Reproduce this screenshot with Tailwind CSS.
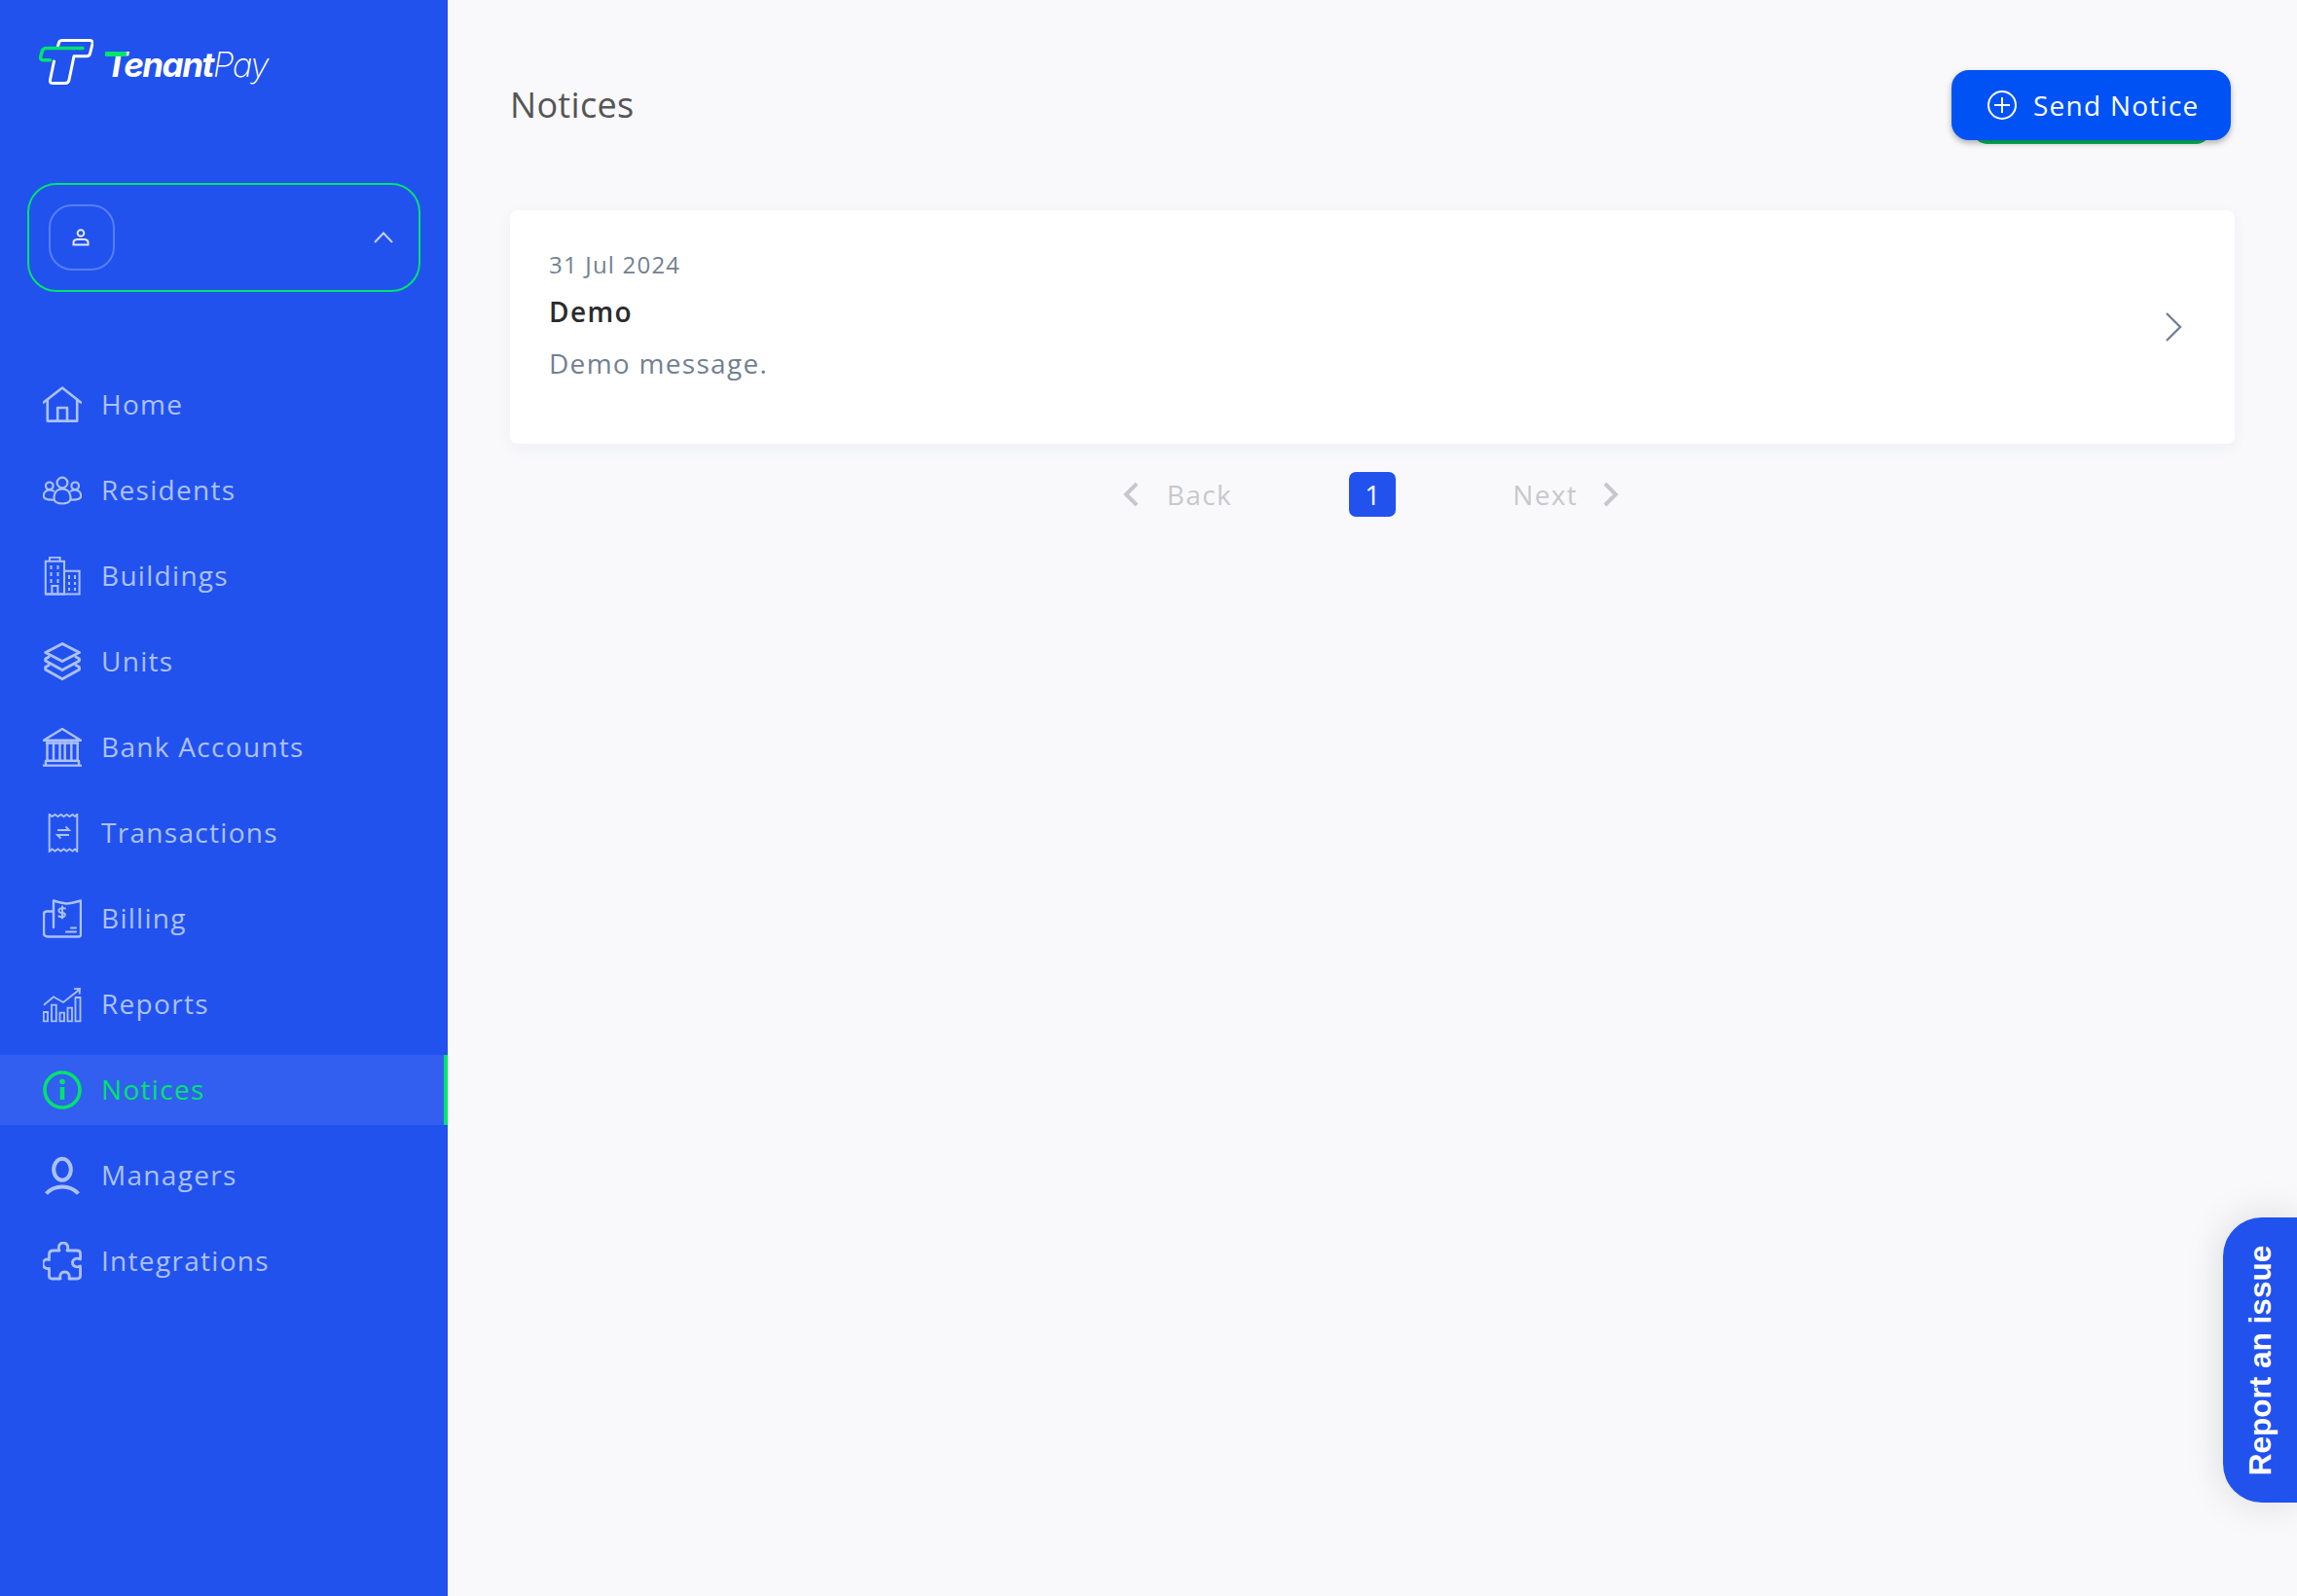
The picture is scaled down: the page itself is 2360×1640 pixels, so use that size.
<!DOCTYPE html>
<html lang="en">
<head>
<meta charset="utf-8">
<title>Notices</title>
<script src="https://cdn.jsdelivr.net/npm/@tailwindcss/browser@4"></script>
</head>
<body class="m-0">
<div class="relative flex w-[2360px] h-[1640px] overflow-hidden bg-[#f9f9fb] font-['Open_Sans',sans-serif]">
  <aside class="w-[460px] shrink-0 h-full bg-[#2152ee] flex flex-col">
    <div class="h-[188px] pl-[40px] pt-[40px] flex items-start gap-[12px]">
      <svg class="w-[56px] h-[48px] shrink-0" viewBox="0 0 56 48" fill="none" stroke-linejoin="round" stroke-linecap="round">
        <path d="M19 9 L20.5 4 Q21 1.5 24 1.5 H52 Q55.5 1.5 55 5 L52.5 15 Q52 17.7 49 17.7 H36 L31 42 Q30.5 45.5 27 45.5 H14 Q11 45.5 11.5 42 L15.5 23" stroke="#fff" stroke-width="3"/>
        <path d="M45 9.5 H8 Q4.5 9.5 3.5 12 L1.8 18 Q1 21.8 5 21.8 H11.5" stroke="#00e36d" stroke-width="3.6"/>
      </svg>
      <div class="relative mt-[4px] h-[44px] text-[35px] leading-[44px] italic tracking-[-1.5px] text-white font-['Inter',sans-serif] whitespace-nowrap">
        <span class="font-bold">Tenant</span><span class="font-extralight">Pay</span>
        <div class="absolute left-0 top-[9px] w-[22px] h-[5px] bg-[#00e36d]"></div>
      </div>
    </div>
    <div class="mx-[28px] h-[112px] rounded-[30px] border-2 border-[#00e36d] flex items-center pl-[20px] pr-[26px] justify-between">
      <div class="w-[68px] h-[68px] rounded-[24px] border-2 border-white/25 flex items-center justify-center">
        <svg class="w-[18px] h-[18px] -ml-[2px]" viewBox="0 0 18 18" fill="none" stroke="#e4e6f0" stroke-width="2"><circle cx="9" cy="4.5" r="3.3"/><path d="M1.5 16.5 V14 Q1.5 11.5 5 11 H13 Q16.5 11.5 16.5 14 V16.5 Z"/></svg>
      </div>
      <svg class="w-[20px] h-[12px]" viewBox="0 0 20 12" fill="none" stroke="#c5cffa" stroke-width="2"><path d="M1 11 L10 1.5 L19 11"/></svg>
    </div>
    <nav class="mt-[80px] flex flex-col gap-[16px] text-[28px] leading-[38px] tracking-[1.3px] text-[#adc1ff]">
      <a class="h-[72px] flex items-center gap-[20px] pl-[44px]">
        <svg class="w-[40px] h-[40px] shrink-0" viewBox="0 0 40 40" fill="none" stroke="#adc1ff" stroke-width="2.6" stroke-linejoin="round" stroke-linecap="round"><path d="M0.8 17.5 L20 2.5 L39 17.5"/><path d="M4.8 14.5 V36.6 H35.2 V14.5"/><path d="M15.2 36.6 V23 H25 V36.6"/></svg>
        <span class="pb-[2px]">Home</span>
      </a>
      <a class="h-[72px] flex items-center gap-[20px] pl-[44px]">
        <svg class="w-[40px] h-[40px] shrink-0" viewBox="0 0 40 40" fill="none" stroke="#adc1ff" stroke-width="2.2" stroke-linejoin="round"><circle cx="20" cy="12" r="5.4"/><path d="M11.5 28 C11.5 21 15 18.5 20 18.5 S28.5 21 28.5 28 C28.5 32 24 33.5 20 33.5 S11.5 32 11.5 28 Z"/><circle cx="6.8" cy="15.3" r="3.8"/><circle cx="33.2" cy="15.3" r="3.8"/><path d="M11.8 21 C10 19.5 8.5 19.5 6.5 19.5 C3 19.5 0.8 22.5 0.8 25.5 C0.8 28.5 4 29.8 11.4 29.5"/><path d="M28.2 21 C30 19.5 31.5 19.5 33.5 19.5 C37 19.5 39.2 22.5 39.2 25.5 C39.2 28.5 36 29.8 28.6 29.5"/></svg>
        <span class="pb-[2px]">Residents</span>
      </a>
      <a class="h-[72px] flex items-center gap-[20px] pl-[44px]">
        <svg class="w-[40px] h-[40px] shrink-0" viewBox="0 0 40 40" fill="none" stroke="#adc1ff" stroke-width="2"><path d="M2.8 38.6 V4.8 H22 V38.6 Z"/><path d="M7 4.8 V0.8 H17.6 V4.8"/><path d="M22 14.8 H37.6 V38.6 H2.8"/><path d="M9.4 38.6 V30 H15.4 V38.6"/><path d="M8.5 9 V13 M8.5 16 V20 M8.5 23 V27 M15.5 9 V13 M15.5 16 V20 M15.5 23 V27 M27 19 V23 M27 26 V29 M27 32 V35 M33 19 V23 M33 26 V29 M33 32 V35"/></svg>
        <span class="pb-[2px]">Buildings</span>
      </a>
      <a class="h-[72px] flex items-center gap-[20px] pl-[44px]">
        <svg class="w-[40px] h-[40px] shrink-0" viewBox="0 0 40 40" fill="none" stroke="#adc1ff" stroke-width="2.8" stroke-linejoin="round"><path d="M20 1.4 L37.5 10.5 L20 19.5 L2.7 10.5 Z"/><path d="M7 14.5 L2.7 17 V19 L20 28.5 L37.5 19 V17 L33 14.5"/><path d="M7 23 L2.7 25.5 V28 L20 37.8 L37.5 28 V25.5 L33 23"/></svg>
        <span class="pb-[2px]">Units</span>
      </a>
      <a class="h-[72px] flex items-center gap-[20px] pl-[44px]">
        <svg class="w-[40px] h-[40px] shrink-0" viewBox="0 0 40 40" fill="none" stroke="#adc1ff" stroke-width="2.4" stroke-linejoin="round" stroke-linecap="round"><path d="M0.8 12.8 L20 1 L39 12.8 Z"/><path d="M4 15.5 H36"/><path d="M4.5 15.5 V33.5 M11 15.5 V33.5 M17.5 15.5 V33.5 M22.7 15.5 V33.5 M29.3 15.5 V33.5 M35.7 15.5 V33.5"/><path d="M4 33.7 H36 M0.8 38.6 H39 M3 38.6 V34 M37 38.6 V34"/></svg>
        <span class="pb-[2px]">Bank Accounts</span>
      </a>
      <a class="h-[72px] flex items-center gap-[20px] pl-[44px]">
        <svg class="w-[40px] h-[40px] shrink-0" viewBox="0 0 40 40" fill="none" stroke="#adc1ff" stroke-width="1.9"><path d="M6.7 39 V0.7 L9.5 3 L12.5 1 L15.5 3 L18.5 1 L21.5 3 L24.5 1 L27.5 3 L30.5 1 L33 3 L35.3 0.7 V39 L33 36.5 L30.5 38.5 L27.5 36.5 L24.5 38.5 L21.5 36.5 L18.5 38.5 L15.5 36.5 L12.5 38.5 L9.5 36.5 Z"/><path d="M15 17 H27 L23.5 13.5"/><path d="M27 22 H15 L18.5 25.5"/></svg>
        <span class="pb-[2px]">Transactions</span>
      </a>
      <a class="h-[72px] flex items-center gap-[20px] pl-[44px]">
        <svg class="w-[40px] h-[40px] shrink-0" viewBox="0 0 40 40" fill="none" stroke="#adc1ff" stroke-width="2.4" stroke-linejoin="round" stroke-linecap="round"><path d="M11 29 V1.5 C16 3 20 4 24 4.5 C29 4.5 34 3 39 1.5 V36.5 Q39 38.5 37 38.5 H5 Q1 38.5 1 34.5 V16 Q1 12.5 4 12.5 H11"/><path d="M20 7.5 V19.5 M23 9.5 Q18 8 16.5 11 Q16 14 20 14 Q24 14.5 22.5 17 Q21 19.5 16.5 17.5" stroke-width="2"/><path d="M24 33.5 H34 M29 29.5 H34" stroke-width="2.2"/></svg>
        <span class="pb-[2px]">Billing</span>
      </a>
      <a class="h-[72px] flex items-center gap-[20px] pl-[44px]">
        <svg class="w-[40px] h-[40px] shrink-0" viewBox="0 0 40 40" fill="none" stroke="#adc1ff" stroke-width="1.8"><path d="M0.8 28 H5 V37.4 H0.8 Z M9 20.7 H13.8 V37.4 H9 Z M17.5 28.7 H22 V37.4 H17.5 Z M25.5 23.7 H30 V37.4 H25.5 Z M33.5 13 H38.5 V37.4 H33.5 Z"/><path d="M1 20.7 L11 12.3 L21 18 L37.7 4.7"/><path d="M32 4.2 L38 4 L37.7 9.5"/></svg>
        <span class="pb-[2px]">Reports</span>
      </a>
      <a class="h-[72px] flex items-center gap-[20px] pl-[44px] bg-white/8 border-r-[4px] border-[#00e36d] text-[#00e36d]">
        <svg class="w-[40px] h-[40px] shrink-0" viewBox="0 0 40 40" fill="none" stroke="#00e36d"><circle cx="20" cy="20" r="18" stroke-width="3.6"/><path d="M20 17 V30" stroke-width="4.6"/><circle cx="20" cy="11.5" r="2.8" fill="#00e36d" stroke="none"/></svg>
        <span class="pb-[2px]">Notices</span>
      </a>
      <a class="h-[72px] flex items-center gap-[20px] pl-[44px]">
        <svg class="w-[40px] h-[40px] shrink-0" viewBox="0 0 40 40" fill="none" stroke="#adc1ff" stroke-width="4"><ellipse cx="20" cy="13.7" rx="8.8" ry="11"/><path d="M3.5 38.5 C12 29 28 29 36.5 38.5"/></svg>
        <span class="pb-[2px]">Managers</span>
      </a>
      <a class="h-[72px] flex items-center gap-[20px] pl-[44px]">
        <svg class="w-[40px] h-[40px] shrink-0" viewBox="0 0 40 40" fill="none" stroke="#adc1ff" stroke-width="2.8" stroke-linejoin="round"><path d="M11 9 H17 C15 4 18 1 21 1 C24.5 1 27 4.5 25 9 H35 Q38.5 9 38.5 12 V18 C34 16 30.5 18 30.5 21.5 C30.5 25 34 27 38.5 25 V35 Q38.5 38 35 38 H27 C28 33 25.5 31 22.5 31 C19 31 17 33.5 18 38 H9.5 Q6.5 38 6.5 35 V27.5 C2.5 28 0 25.5 0 22.5 C0 19.5 3 17 6.5 18.5 V13 Q6.5 9 11 9 Z"/></svg>
        <span class="pb-[2px]">Integrations</span>
      </a>
    </nav>
  </aside>

  <main class="flex-1 min-w-0 pl-[64px] pr-[64px]">
    <header class="h-[216px] flex items-start justify-between pr-[4px]">
      <h1 class="mt-[84px] text-[36px] leading-[48px] font-normal tracking-[0.3px] text-[#555555]">Notices</h1>
      <div class="relative mt-[72px]">
        <div class="absolute left-[21px] right-[20px] -bottom-[4px] h-[20px] rounded-b-[16px] bg-[#07b85c]"></div>
        <button class="relative h-[72px] w-[287px] rounded-[18px] bg-[#0052f5] shadow-[0_3px_6px_rgba(0,0,0,0.3)] flex items-center pl-[36px] gap-[16px] text-white text-[28px] tracking-[1.25px]">
          <svg class="w-[32px] h-[32px] shrink-0" viewBox="0 0 32 32" fill="none" stroke="#fff" stroke-width="2"><circle cx="16" cy="16" r="14"/><path d="M16 8 V24 M8 16 H24"/></svg>
          <span>Send Notice</span>
        </button>
      </div>
    </header>
    <section class="h-[240px] rounded-[8px] bg-white shadow-[0_4px_16px_rgba(40,50,90,0.05)] pl-[40px] pr-[53px] flex items-center justify-between">
      <div class="-mt-[26px]">
        <p class="text-[24px] leading-[32px] tracking-[1.2px] text-[#728190]">31 Jul 2024</p>
        <p class="mt-[16px] text-[28px] leading-[32px] font-semibold tracking-[1.4px] text-[#2b2b2b]">Demo</p>
        <p class="mt-[20px] text-[28px] leading-[34px] tracking-[1.3px] text-[#728190]">Demo message.</p>
      </div>
      <svg class="w-[20px] h-[32px]" viewBox="0 0 20 32" fill="none" stroke="#728190" stroke-width="2.4"><path d="M3 2 L17 16 L3 30"/></svg>
    </section>
    <div class="mt-[29px] flex items-center justify-center h-[46px] pr-[3px] text-[28px] tracking-[1.4px] text-[#c8c8cc]">
      <svg class="w-[16px] h-[26px]" viewBox="0 0 16 26" fill="none" stroke="#c8c8cc" stroke-width="4"><path d="M14 2 L3 13 L14 24"/></svg>
      <span class="ml-[29px]">Back</span>
      <span class="ml-[120px] w-[48px] h-[46px] rounded-[7px] bg-[#2152ee] text-white flex items-center justify-center tracking-normal">1</span>
      <span class="ml-[120px]">Next</span>
      <svg class="ml-[26px] w-[16px] h-[26px]" viewBox="0 0 16 26" fill="none" stroke="#c8c8cc" stroke-width="4"><path d="M2 2 L13 13 L2 24"/></svg>
    </div>
  </main>

  <button class="absolute right-0 top-[1251px] w-[76px] h-[293px] rounded-l-[40px] bg-[#2152ee] shadow-[0_0_40px_rgba(0,0,0,0.13)] flex items-center justify-center">
    <span class="block -rotate-90 whitespace-nowrap text-white font-['Liberation_Sans',sans-serif] font-bold text-[31.5px] leading-[40px]">Report an issue</span>
  </button>
</div>
</body>
</html>
